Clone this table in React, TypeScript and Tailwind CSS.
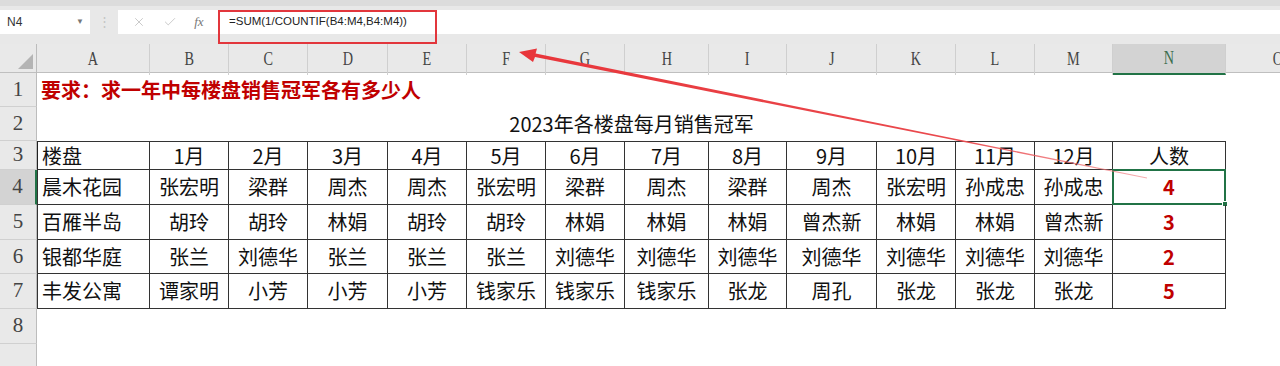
import { X, Check } from "lucide-react";

const COLS =
  "grid grid-cols-[37px_113px_79px_79px_80px_79px_79px_79px_84px_78px_90px_79px_79px_78px_113px_104px]";

const LETTERS = ["A", "B", "C", "D", "E", "F", "G", "H", "I", "J", "K", "L", "M", "N", "O"];

const HEAD = ["楼盘", "1月", "2月", "3月", "4月", "5月", "6月", "7月", "8月", "9月", "10月", "11月", "12月", "人数"];

const DATA: [string, string[], number][] = [
  ["晨木花园", ["张宏明", "梁群", "周杰", "周杰", "张宏明", "梁群", "周杰", "梁群", "周杰", "张宏明", "孙成忠", "孙成忠"], 4],
  ["百雁半岛", ["胡玲", "胡玲", "林娟", "胡玲", "胡玲", "林娟", "林娟", "林娟", "曾杰新", "林娟", "林娟", "曾杰新"], 3],
  ["银都华庭", ["张兰", "刘德华", "张兰", "张兰", "张兰", "刘德华", "刘德华", "刘德华", "刘德华", "刘德华", "刘德华", "刘德华"], 2],
  ["丰发公寓", ["谭家明", "小芳", "小芳", "小芳", "钱家乐", "钱家乐", "钱家乐", "张龙", "周孔", "张龙", "张龙", "张龙"], 5],
];

const cjk = "font-['Microsoft_YaHei','Noto_Sans_CJK_SC',sans-serif]";

function RowNum({ n, h, active }: { n: number | string; h: string; active?: boolean }) {
  return (
    <div
      className={`${h} flex items-center justify-center border-b border-[#d0d0d0] font-['Liberation_Serif',serif] text-[21px] text-[#444] ${
        active ? "bg-[#d3d3d3] border-r-2 border-r-[#217346]" : "bg-[#e9e9e9] border-r border-r-[#bcbcbc]"
      }`}
    >
      {n}
    </div>
  );
}

export default function App() {
  return (
    <div className="relative w-[1280px] h-[366px] overflow-hidden bg-white">
      {/* formula bar */}
      <div className="h-[44px] bg-[#e8e8e8] border-t-[6px] border-[#dcdcdc] flex items-start pt-[4px]">
        <div className="w-[90px] h-[24px] bg-white flex items-center justify-between pl-[7px] pr-[6px] font-['Liberation_Sans',sans-serif] text-[12px] text-[#333]">
          N4
          <span className="text-[8px] text-[#777]">▼</span>
        </div>
        <div className="w-[28px] h-[24px] flex items-center justify-center text-[#c4c4c4] text-[13px]">⋮</div>
        <div className="w-[100px] h-[24px] bg-white flex items-center justify-around px-[6px]">
          <X size={14} strokeWidth={1.2} className="text-[#b3b3b3]" />
          <Check size={14} strokeWidth={1.2} className="text-[#b3b3b3]" />
          <span className="font-['Liberation_Serif',serif] italic text-[13px] text-[#777]">fx</span>
        </div>
        <div className="flex-1 h-[24px] bg-white flex items-center pl-[11px] font-['Liberation_Sans',sans-serif] text-[11.5px] text-[#222]">
          =SUM(1/COUNTIF(B4:M4,B4:M4))
        </div>
      </div>

      {/* column headers */}
      <div className={`${COLS} h-[29px] bg-[#e9e9e9] border-b border-[#bfbfbf]`}>
        <div className="border-r border-[#bcbcbc] relative">
          <svg width="37" height="28" className="absolute inset-0">
            <polygon points="18,25 33,10 33,25" fill="#b4b4b4" />
          </svg>
        </div>
        {LETTERS.map((l) => (
          <div
            key={l}
            className={`flex items-center justify-center border-r border-[#cfcfcf] font-['Liberation_Serif',serif] text-[19px] ${
              l === "N" ? "bg-[#d3d3d3] text-[#3b6e4f] border-b-2 border-b-[#217346]" : "text-[#444]"
            }`}
          >
            <span className="scale-x-75">{l}</span>
          </div>
        ))}
      </div>

      {/* row 1 */}
      <div className={COLS}>
        <RowNum n={1} h="h-[34px]" />
        <div className={`col-span-14 flex items-center pl-[4px] ${cjk} text-[20px] font-bold text-[#c00000] leading-none`}>
          要求：求一年中每楼盘销售冠军各有多少人
        </div>
      </div>

      {/* row 2 */}
      <div className={COLS}>
        <RowNum n={2} h="h-[34px]" />
        <div className={`col-span-14 flex items-center justify-center ${cjk} text-[20px] text-[#111] leading-none`}>
          2023年各楼盘每月销售冠军
        </div>
      </div>

      {/* row 3 header */}
      <div className={COLS}>
        <RowNum n={3} h="h-[29px]" />
        {HEAD.map((t, i) => (
          <div
            key={t}
            className={`flex items-center ${i === 0 ? "justify-start pl-[4px] border-l border-l-[#222]" : "justify-center"} border-t border-r border-b border-[#333] ${cjk} text-[20px] text-[#111] leading-none`}
          >
            {t}
          </div>
        ))}
      </div>

      {/* data rows */}
      {DATA.map(([name, months, count], r) => (
        <div key={name} className={COLS}>
          <RowNum n={r + 4} h={r === 2 ? "h-[34px]" : "h-[35px]"} active={r === 0} />
          <div className={`flex items-center pl-[4px] border-l border-r border-b border-[#333] ${cjk} text-[20px] text-[#111] leading-none`}>
            {name}
          </div>
          {months.map((m, i) => (
            <div
              key={i}
              className={`flex items-center justify-center border-r border-b border-[#333] ${cjk} text-[20px] text-[#111] leading-none`}
            >
              {m}
            </div>
          ))}
          <div
            className={`relative flex items-center justify-center border-r border-b border-[#333] ${cjk} text-[20px] font-bold text-[#c00000] leading-none`}
          >
            {count}
            {r === 0 && (
              <div className="absolute -top-[1px] -left-[1px] -right-[1px] -bottom-[1px] border-2 border-[#217346]">
                <div className="absolute -right-[4px] -bottom-[4px] w-[6px] h-[6px] bg-[#217346] border border-white" />
              </div>
            )}
          </div>
        </div>
      ))}

      {/* row 8 and the cut-off row 9 */}
      <div className={COLS}>
        <RowNum n={8} h="h-[35px]" />
      </div>
      <div className={COLS}>
        <RowNum n="" h="h-[30px]" />
      </div>

      {/* annotation: red box round the formula */}
      <div className="absolute left-[218px] top-[10px] w-[219px] h-[34px] border-2 border-[#e2363c]" />

      {/* annotation: arrow */}
      <svg className="absolute inset-0 pointer-events-none" width="1280" height="366">
        <defs>
          <linearGradient id="fade" x1="519" y1="52" x2="1147" y2="178" gradientUnits="userSpaceOnUse">
            <stop offset="0" stopColor="#e8353a" />
            <stop offset="0.7" stopColor="#ea4a4e" />
            <stop offset="1" stopColor="#ef7c80" stopOpacity="0.6" />
          </linearGradient>
        </defs>
        <polygon
          points="519,52 537,48.5 535.6,53.4 1147.1,177.6 1146.9,178.4 535,57 533,62"
          fill="url(#fade)"
        />
      </svg>
    </div>
  );
}
